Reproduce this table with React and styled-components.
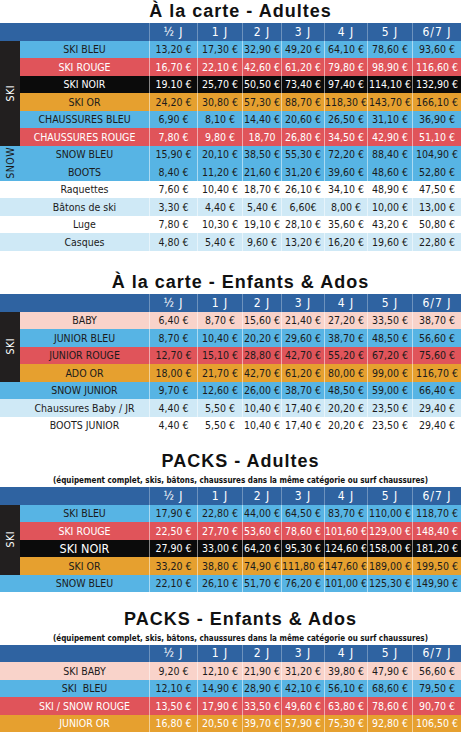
import styled, { createGlobalStyle } from 'styled-components';

const tones = {
  blue: { bg: '#57b4e4', fg: '#1b1b1b' },
  red: { bg: '#e0545a', fg: '#ffffff' },
  black: { bg: '#0b0b0b', fg: '#ffffff' },
  orange: { bg: '#e6a02f', fg: '#1b1b1b' },
  pale: { bg: '#cfe9f6', fg: '#1b1b1b' },
  white: { bg: '#ffffff', fg: '#1b1b1b' },
  pink: { bg: '#f9d3ca', fg: '#1b1b1b' },
};

const days = ['½ J', '1 J', '2 J', '3 J', '4 J', '5 J', '6/7 J'];
const packNote =
  '(équipement complet, skis, bâtons, chaussures dans la même catégorie ou surf chaussures)';

const sections = [
  {
    title: 'À la carte - Adultes',
    top: 0,
    blocks: [
      {
        side: 'SKI',
        tone: 'sideBlack',
        rows: [
          ['SKI BLEU', 'blue', ['13,20 €', '17,30 €', '32,90 €', '49,20 €', '64,10 €', '78,60 €', '93,60 €']],
          ['SKI ROUGE', 'red', ['16,70 €', '22,10 €', '42,60 €', '61,20 €', '79,80 €', '98,90 €', '116,60 €']],
          ['SKI NOIR', 'black', ['19.10 €', '25,70 €', '50,50 €', '73,40 €', '97,40 €', '114,10 €', '132,90 €']],
          ['SKI OR', 'orange', ['24,20 €', '30,80 €', '57,30 €', '88,70 €', '118,30 €', '143,70 €', '166,10 €']],
          ['CHAUSSURES BLEU', 'blue', ['6,90 €', '8,10 €', '14,40 €', '20,60 €', '26,50 €', '31,10 €', '36,90 €']],
          ['CHAUSSURES ROUGE', 'red', ['7,80 €', '9,80 €', '18,70', '26,80 €', '34,50 €', '42,90 €', '51,10 €']],
        ],
      },
      {
        side: 'SNOW',
        tone: 'blue',
        rows: [
          ['SNOW BLEU', 'blue', ['15,90 €', '20,10 €', '38,50 €', '55,30 €', '72,20 €', '88,40 €', '104,90 €']],
          ['BOOTS', 'blue', ['8,40 €', '11,20 €', '21,60 €', '31,20 €', '39,60 €', '48,60 €', '52,80 €']],
        ],
      },
      {
        rows: [
          ['Raquettes', 'white', ['7,60 €', '10,40 €', '18,70 €', '26,10 €', '34,10 €', '48,90 €', '47,50 €']],
          ['Bâtons de ski', 'pale', ['3,30 €', '4,40 €', '5,40 €', '6,60€', '8,00 €', '10,00 €', '13,00 €']],
          ['Luge', 'white', ['7,80 €', '10,30 €', '19,10 €', '28,10 €', '35,60 €', '43,20 €', '50,80 €']],
          ['Casques', 'pale', ['4,80 €', '5,40 €', '9,60 €', '13,20 €', '16,20 €', '19,60 €', '22,80 €']],
        ],
      },
    ],
  },
  {
    title: 'À la carte - Enfants & Ados',
    top: 19.5,
    blocks: [
      {
        side: 'SKI',
        tone: 'sideBlack',
        rows: [
          ['BABY', 'pink', ['6,40 €', '8,70 €', '15,60 €', '21,40 €', '27,20 €', '33,50 €', '38,70 €']],
          ['JUNIOR BLEU', 'blue', ['8,70 €', '10,40 €', '20,20 €', '29,60 €', '38,70 €', '48,50 €', '56,60 €']],
          ['JUNIOR ROUGE', 'red', ['12,70 €', '15,10 €', '28,80 €', '42,70 €', '55,20 €', '67,20 €', '75,60 €'], '#1b1b1b'],
          ['ADO OR', 'orange', ['18,00 €', '21,70 €', '42,70 €', '61,20 €', '80,00 €', '99,00 €', '116,70 €']],
        ],
      },
      {
        rows: [
          ['SNOW JUNIOR', 'blue', ['9,70 €', '12,60 €', '26,00 €', '38,70 €', '48,50 €', '59,00 €', '66,40 €']],
          ['Chaussures Baby / JR', 'pale', ['4,40 €', '5,50 €', '10,40 €', '17,40 €', '20,20 €', '23,50 €', '29,40 €']],
          ['BOOTS JUNIOR', 'white', ['4,40 €', '5,50 €', '10,40 €', '17,40 €', '20,20 €', '23,50 €', '29,40 €']],
        ],
      },
    ],
  },
  {
    title: 'PACKS - Adultes',
    note: packNote,
    top: 15,
    blocks: [
      {
        side: 'SKI',
        tone: 'sideBlack',
        rows: [
          ['SKI BLEU', 'blue', ['17,90 €', '22,80 €', '44,00 €', '64,50 €', '83,70 €', '110,00 €', '118,70 €']],
          ['SKI ROUGE', 'red', ['22,50 €', '27,70 €', '53,60 €', '78,60 €', '101,60 €', '129,00 €', '148,40 €']],
          ['SKI NOIR', 'black', ['27,90 €', '33,00 €', '64,20 €', '95,30 €', '124,60 €', '158,00 €', '181,20 €'], null, true],
          ['SKI OR', 'orange', ['33,20 €', '38,80 €', '74,90 €', '111,80 €', '147,60 €', '189,00 €', '199,50 €']],
        ],
      },
      {
        rows: [
          ['SNOW BLEU', 'blue', ['22,10 €', '26,10 €', '51,70 €', '76,20 €', '101,00 €', '125,30 €', '149,90 €']],
        ],
      },
    ],
  },
  {
    title: 'PACKS - Enfants & Ados',
    note: packNote,
    top: 14.5,
    blocks: [
      {
        rows: [
          ['SKI BABY', 'pink', ['9,20 €', '12,10 €', '21,90 €', '31,20 €', '39,80 €', '47,90 €', '56,60 €']],
          ['SKI\u00a0 BLEU', 'blue', ['12,10 €', '14,90 €', '28,90 €', '42,10 €', '56,10 €', '68,60 €', '79,50 €']],
          ['SKI / SNOW ROUGE', 'red', ['13,50 €', '17,90 €', '33,50 €', '49,60 €', '63,80 €', '78,60 €', '90,70 €']],
          ['JUNIOR OR', 'orange', ['16,80 €', '20,50 €', '39,70 €', '57,90 €', '75,30 €', '92,80 €', '106,50 €'], '#ffffff'],
        ],
      },
    ],
  },
];

const sideTones = {
  sideBlack: { bg: '#221f1f', fg: '#ffffff' },
  blue: { bg: '#57b4e4', fg: '#1b1b1b' },
};

export default function App() {
  return (
    <>
      <GlobalStyle />
      <Page>
        {sections.map((section) => (
          <Section key={section.title} $top={section.top}>
            <Heading $first={section.top === 0}>{section.title}</Heading>
            {section.note && <Note>{section.note}</Note>}
            <Grid>
              <HeadCell $plain />
              <HeadCell $plain />
              {days.map((d) => (
                <HeadCell key={d}>{d}</HeadCell>
              ))}
              {section.blocks.map((block, bi) =>
                block.rows.map(([name, toneKey, prices, fg, big], ri) => {
                  const tone = tones[toneKey];
                  const color = fg || tone.fg;
                  return [
                    block.side ? (
                      ri === 0 && (
                        <SideCell
                          key={`s${bi}`}
                          $span={block.rows.length}
                          $bg={sideTones[block.tone].bg}
                          $fg={sideTones[block.tone].fg}
                        >
                          <SideLabel>{block.side}</SideLabel>
                        </SideCell>
                      )
                    ) : (
                      <Cell key={`e${bi}${ri}`} $bg={tone.bg} />
                    ),
                    <NameCell key={`n${bi}${ri}`} $bg={tone.bg} $fg={color} $big={big}>
                      {name}
                    </NameCell>,
                    ...prices.map((p, pi) => (
                      <PriceCell key={`p${bi}${ri}${pi}`} $bg={tone.bg} $fg={color}>
                        {p}
                      </PriceCell>
                    )),
                  ];
                })
              )}
            </Grid>
          </Section>
        ))}
      </Page>
    </>
  );
}

const GlobalStyle = createGlobalStyle`
  body {
    margin: 0;
    background: #ffffff;
    font-family: 'DejaVu Sans Condensed', 'DejaVu Sans', sans-serif;
  }
`;

const Page = styled.div`
  width: 461px;
  display: flex;
  flex-direction: column;
  overflow: hidden;
`;

const Section = styled.section`
  display: flex;
  flex-direction: column;
  padding-top: ${(p) => p.$top}px;
`;

const Heading = styled.h2`
  margin: 0;
  padding-left: 20px;
  height: ${(p) => (p.$first ? 23 : 24)}px;
  line-height: ${(p) => (p.$first ? 23 : 24)}px;
  text-align: center;
  font-family: 'Liberation Sans', Arial, sans-serif;
  font-weight: 700;
  font-size: 18px;
  letter-spacing: 1px;
  color: #111111;
`;

const Note = styled.div`
  margin-top: 2px;
  padding-left: 20px;
  height: 12px;
  line-height: 12px;
  text-align: center;
  font-family: 'DejaVu Sans Condensed', 'DejaVu Sans', sans-serif;
  font-weight: 700;
  font-size: 8px;
  color: #111111;
  white-space: nowrap;
`;

const Grid = styled.div`
  display: grid;
  grid-template-columns: 20px 129px 48px 45px 39px 43px 43px 45px 49px;
  grid-auto-rows: 17.5px;
`;

const HeadCell = styled.div`
  display: flex;
  align-items: center;
  justify-content: center;
  background: #2f63a1;
  color: #ffffff;
  font-size: 12px;
  letter-spacing: 1px;
  border-left: ${(p) => (p.$plain ? 'none' : '1px solid rgba(255, 255, 255, 0.3)')};
`;

const Cell = styled.div`
  background: ${(p) => p.$bg};
`;

const NameCell = styled.div`
  display: flex;
  align-items: center;
  justify-content: center;
  background: ${(p) => p.$bg};
  color: ${(p) => p.$fg};
  font-size: ${(p) => (p.$big ? 12.5 : 10.5)}px;
  white-space: pre;
`;

const PriceCell = styled.div`
  display: flex;
  align-items: center;
  justify-content: center;
  background: ${(p) => p.$bg};
  color: ${(p) => p.$fg};
  font-size: 10.5px;
  border-left: 1px solid rgba(255, 255, 255, 0.5);
  white-space: nowrap;
`;

const SideCell = styled.div`
  grid-row: span ${(p) => p.$span};
  display: flex;
  align-items: center;
  justify-content: center;
  overflow: hidden;
  background: ${(p) => p.$bg};
  color: ${(p) => p.$fg};
`;

const SideLabel = styled.span`
  writing-mode: vertical-rl;
  transform: rotate(180deg);
  font-size: 10.5px;
  letter-spacing: 0.5px;
`;
